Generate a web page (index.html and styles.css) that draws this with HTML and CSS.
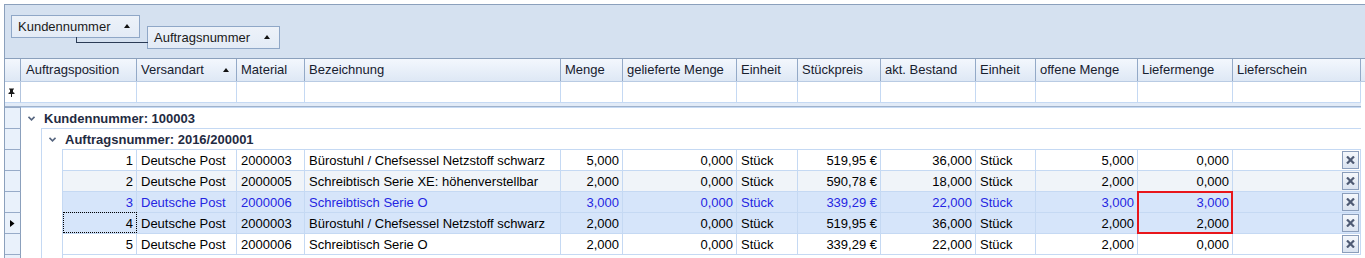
FILE: index.html
```html
<!DOCTYPE html>
<html lang="de">
<head>
<meta charset="utf-8">
<title>Auftragspositionen</title>
<link rel="stylesheet" href="styles.css">
</head>
<body>
<div class="grid">
  <div class="group-panel">
    <div class="gbox gbox-1"><span>Kundennummer</span><svg class="tri" width="6" height="4" viewBox="0 0 6 4"><polygon points="0,4 3,0 6,4" /></svg></div>
    <div class="gbox gbox-2"><span>Auftragsnummer</span><svg class="tri" width="6" height="4" viewBox="0 0 6 4"><polygon points="0,4 3,0 6,4" /></svg></div>
  </div>

  <div class="head">
    <div class="hind"></div>
    <div class="hc first">Auftragsposition</div>
    <div class="hc sorted"><span>Versandart</span><svg class="tri" width="6" height="4" viewBox="0 0 6 4"><polygon points="0,4 3,0 6,4" /></svg></div>
    <div class="hc">Material</div>
    <div class="hc">Bezeichnung</div>
    <div class="hc">Menge</div>
    <div class="hc">gelieferte Menge</div>
    <div class="hc">Einheit</div>
    <div class="hc">Stückpreis</div>
    <div class="hc">akt. Bestand</div>
    <div class="hc">Einheit</div>
    <div class="hc">offene Menge</div>
    <div class="hc">Liefermenge</div>
    <div class="hc">Lieferschein</div>
    <div class="hfill"></div>
  </div>

  <div class="filter">
    <div class="find"><svg width="7" height="9" viewBox="0 0 7 9"><path d="M1 0.5h5v1h-1v2.5l1.5 1v1h-6v-1l1.5-1v-2.5h-1z" fill="#1a1a1a"/><rect x="3" y="5.5" width="1" height="3.5" fill="#1a1a1a"/></svg></div>
    <div class="fc"></div><div class="fc"></div><div class="fc"></div><div class="fc"></div>
    <div class="fc"></div><div class="fc"></div><div class="fc"></div><div class="fc"></div>
    <div class="fc"></div><div class="fc"></div><div class="fc"></div><div class="fc"></div>
    <div class="fc"></div>
  </div>
  <div class="sep"></div>

  <div class="grp1">
    <div class="ind"></div>
    <div class="gcell"><svg class="chev" width="7" height="5" viewBox="0 0 7 5"><path d="M0.5 0.8 L3.5 3.8 L6.5 0.8" fill="none" stroke="#56657f" stroke-width="1.6"/></svg>Kundennummer: 100003</div>
  </div>
  <div class="grp2">
    <div class="ind"></div>
    <div class="indent"></div>
    <div class="gcell"><svg class="chev" width="7" height="5" viewBox="0 0 7 5"><path d="M0.5 0.8 L3.5 3.8 L6.5 0.8" fill="none" stroke="#56657f" stroke-width="1.6"/></svg>Auftragsnummer: 2016/200001</div>
  </div>

  <div class="drow">
    <div class="ind"></div><div class="indent"></div><div class="indent"></div>
    <div class="c r">1</div><div class="c">Deutsche Post</div><div class="c">2000003</div><div class="c">Bürostuhl / Chefsessel Netzstoff schwarz</div>
    <div class="c r">5,000</div><div class="c r">0,000</div><div class="c">Stück</div><div class="c r">519,95 €</div><div class="c r">36,000</div><div class="c">Stück</div>
    <div class="c r">5,000</div><div class="c r">0,000</div><div class="c del-cell"><span class="del"><svg width="9" height="8" viewBox="0 0 9 8"><path d="M1 0.5 L8 7.5 M8 0.5 L1 7.5" stroke="#4f5b74" stroke-width="2.2"/></svg></span></div>
  </div>
  <div class="drow alt">
    <div class="ind"></div><div class="indent"></div><div class="indent"></div>
    <div class="c r">2</div><div class="c">Deutsche Post</div><div class="c">2000005</div><div class="c">Schreibtisch Serie XE: höhenverstellbar</div>
    <div class="c r">2,000</div><div class="c r">0,000</div><div class="c">Stück</div><div class="c r">590,78 €</div><div class="c r">18,000</div><div class="c">Stück</div>
    <div class="c r">2,000</div><div class="c r">0,000</div><div class="c del-cell"><span class="del"><svg width="9" height="8" viewBox="0 0 9 8"><path d="M1 0.5 L8 7.5 M8 0.5 L1 7.5" stroke="#4f5b74" stroke-width="2.2"/></svg></span></div>
  </div>
  <div class="drow sel blue">
    <div class="ind"></div><div class="indent"></div><div class="indent"></div>
    <div class="c r">3</div><div class="c">Deutsche Post</div><div class="c">2000006</div><div class="c">Schreibtisch Serie O</div>
    <div class="c r">3,000</div><div class="c r">0,000</div><div class="c">Stück</div><div class="c r">339,29 €</div><div class="c r">22,000</div><div class="c">Stück</div>
    <div class="c r">3,000</div><div class="c r mark">3,000</div><div class="c del-cell"><span class="del"><svg width="9" height="8" viewBox="0 0 9 8"><path d="M1 0.5 L8 7.5 M8 0.5 L1 7.5" stroke="#4f5b74" stroke-width="2.2"/></svg></span></div>
  </div>
  <div class="drow sel">
    <div class="ind"><svg width="5" height="7" viewBox="0 0 5 7"><polygon points="0,0 4.5,3.5 0,7" fill="#000"/></svg></div><div class="indent"></div><div class="indent"></div>
    <div class="c r focus">4</div><div class="c">Deutsche Post</div><div class="c">2000003</div><div class="c">Bürostuhl / Chefsessel Netzstoff schwarz</div>
    <div class="c r">2,000</div><div class="c r">0,000</div><div class="c">Stück</div><div class="c r">519,95 €</div><div class="c r">36,000</div><div class="c">Stück</div>
    <div class="c r">2,000</div><div class="c r">2,000</div><div class="c del-cell"><span class="del"><svg width="9" height="8" viewBox="0 0 9 8"><path d="M1 0.5 L8 7.5 M8 0.5 L1 7.5" stroke="#4f5b74" stroke-width="2.2"/></svg></span></div>
  </div>
  <div class="drow">
    <div class="ind"></div><div class="indent"></div><div class="indent"></div>
    <div class="c r">5</div><div class="c">Deutsche Post</div><div class="c">2000006</div><div class="c">Schreibtisch Serie O</div>
    <div class="c r">2,000</div><div class="c r">0,000</div><div class="c">Stück</div><div class="c r">339,29 €</div><div class="c r">22,000</div><div class="c">Stück</div>
    <div class="c r">2,000</div><div class="c r">0,000</div><div class="c del-cell"><span class="del"><svg width="9" height="8" viewBox="0 0 9 8"><path d="M1 0.5 L8 7.5 M8 0.5 L1 7.5" stroke="#4f5b74" stroke-width="2.2"/></svg></span></div>
  </div>
  <div class="drow tail">
    <div class="ind"></div><div class="indent"></div><div class="indent"></div>
    <div class="t"></div><div class="t"></div><div class="t"></div><div class="t"></div><div class="t"></div><div class="t"></div><div class="t"></div><div class="t"></div>
    <div class="t"></div><div class="t"></div><div class="t"></div><div class="t"></div><div class="t"></div>
  </div>
</div>
</body>
</html>
```

FILE: styles.css
```css
*, *::before, *::after { box-sizing: border-box; }

html, body {
  margin: 0;
  padding: 0;
  background: #ffffff;
}

body {
  font-family: "Liberation Sans", Arial, sans-serif;
  font-size: 13px;
  color: #000;
  overflow: hidden;
}

.grid {
  margin: 4px 0 0 4px;
  border-left: 1px solid #8ba0bc;
  border-top: 1px solid #8ba0bc;
  height: 254px;
  background: #fff;
}

/* group-by panel */
.group-panel {
  height: 53px;
  background: #d5e1f0;
  display: flex;
  align-items: flex-start;
}

.gbox {
  position: relative;
  display: flex;
  align-items: center;
  justify-content: space-between;
  height: 23px;
  border: 1px solid #8fa7c7;
  background: linear-gradient(#edf2f9, #e3ebf6);
  padding: 0 9px 1px 6px;
  color: #1a1a1a;
  white-space: nowrap;
}

.gbox-1 { margin: 10px 0 0 6px; width: 129px; }
.gbox-2 { margin: 21px 0 0 7px; width: 133px; }

.gbox-2::before {
  content: "";
  position: absolute;
  left: -72px;
  top: 10px;
  width: 72px;
  height: 6px;
  border-left: 1px solid #2b3b55;
  border-bottom: 1px solid #2b3b55;
}

.tri { fill: #111; flex: none; }

/* column header */
.head {
  display: grid;
  grid-template-columns: 16px 116px 100px 68px 256px 62px 114px 61px 83px 95px 60px 102px 95px 128px 1fr;
  height: 24px;
  border-top: 1px solid #8ba0bc;
  border-bottom: 1px solid #b9cbe3;
  background: linear-gradient(#f3f7fd, #dee8f5);
}

.hind { border-right: 1px solid #93a9c7; }

.hc {
  border-right: 1px solid #93a9c7;
  padding: 0 0 1px 4px;
  display: flex;
  align-items: center;
  color: #17202e;
  white-space: nowrap;
}

.hc.first { padding-left: 5px; }

.hc.sorted {
  justify-content: space-between;
  padding-right: 7px;
}

/* filter row */
.filter {
  display: grid;
  grid-template-columns: 16px 116px 100px 68px 256px 62px 114px 61px 83px 95px 60px 102px 95px 128px;
  width: 1356px;
  height: 21px;
}

.find {
  border-right: 1px solid #b3c5de;
  border-bottom: 1px solid #c5d9f3;
  display: flex;
  align-items: center;
  padding: 1px 0 0 3px;
}

.fc {
  border-right: 1px solid #c5d9f3;
  border-bottom: 1px solid #c5d9f3;
}

.sep {
  width: 1356px;
  height: 4px;
  background: #e2ebf7;
  border-bottom: 1px solid #9fb2cc;
}

/* indicator column */
.ind {
  background: #e9f1fb;
  border-right: 1px solid #8ba0bc;
  border-top: 1px solid #97abc8;
  display: flex;
  align-items: center;
  justify-content: center;
}

.indent {
  border-right: 1px solid #c5d9f3;
  background: #fff;
}

/* group rows */
.grp1, .grp2 {
  display: grid;
  height: 21px;
}
.grp1 { grid-template-columns: 16px 1340px; }
.grp2 { grid-template-columns: 16px 21px 1319px; }

.gcell {
  border-top: 1px solid #c5d9f3;
  display: flex;
  align-items: center;
  padding-left: 7px;
  font-weight: bold;
  color: #1f2b42;
  white-space: nowrap;
}

.chev { margin-right: 9px; margin-top: 1px; flex: none; }

/* data rows */
.drow {
  display: grid;
  grid-template-columns: 16px 21px 21px 74px 100px 68px 256px 62px 114px 61px 83px 95px 60px 102px 95px 128px;
  height: 21px;
}

.c {
  border-top: 1px solid #c5d9f3;
  border-right: 1px solid #c5d9f3;
  padding: 0 4px;
  display: flex;
  align-items: center;
  white-space: nowrap;
  background: #fff;
}

.c.r {
  justify-content: flex-end;
  padding-right: 3px;
}

.alt .c { background: #f0f4f9; }
.sel .c { background: #d6e5fa; }
.blue .c { color: #2525e2; }

.focus {
  outline: 1px dotted #000;
  outline-offset: -1px;
}

.mark { position: relative; }
.mark::after {
  content: "";
  position: absolute;
  left: -1px;
  top: -1px;
  width: 96px;
  height: 43px;
  border: 2px solid #e8161b;
  pointer-events: none;
}

.del-cell {
  justify-content: flex-end;
  padding: 0 1px 0 0;
}

.del {
  width: 17px;
  height: 18px;
  border: 1px solid #8b9ebb;
  background: linear-gradient(#f5f8fc, #dae3f0);
  display: flex;
  align-items: center;
  justify-content: center;
}

.tail { height: 4px; }
.t { border-top: 1px solid #c5d9f3; }
.tail .ind { border-right: 1px solid #8ba0bc; }
```
